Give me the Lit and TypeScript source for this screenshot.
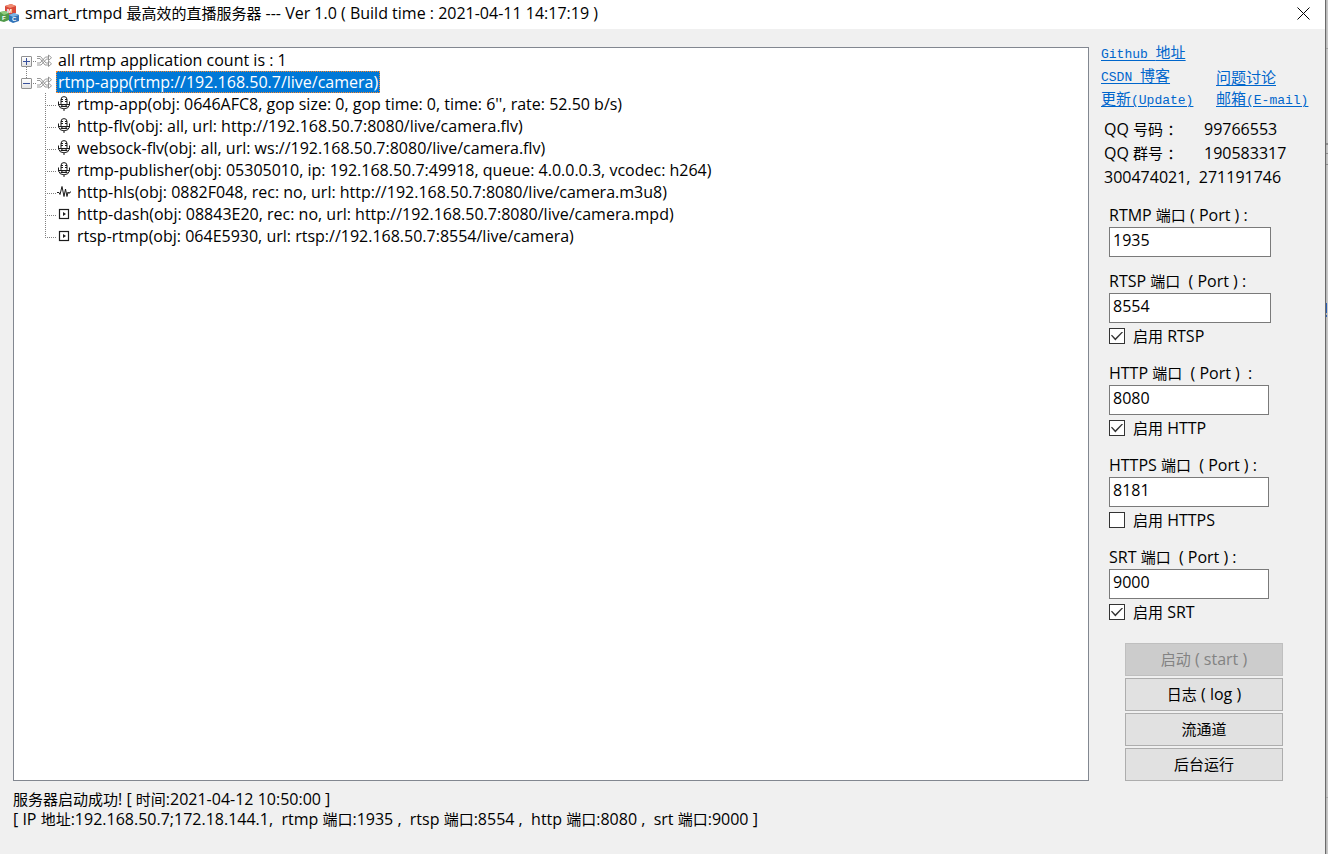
import { LitElement, html, css, svg, nothing } from "lit";
import { customElement, property, state } from "lit/decorators.js";
import { classMap } from "lit/directives/class-map.js";

type IconName = "mic" | "wave" | "play";

interface TreeLeaf {
  icon: IconName;
  text: string;
}

interface PortSetting {
  id: string;
  label: string;
  value: string;
  wide?: boolean;
  toggle?: string;
  enabled?: boolean;
}

const LEAVES: TreeLeaf[] = [
  { icon: "mic", text: "rtmp-app(obj: 0646AFC8, gop size: 0, gop time: 0, time: 6'', rate: 52.50 b/s)" },
  { icon: "mic", text: "http-flv(obj: all, url: http://192.168.50.7:8080/live/camera.flv)" },
  { icon: "mic", text: "websock-flv(obj: all, url: ws://192.168.50.7:8080/live/camera.flv)" },
  { icon: "mic", text: "rtmp-publisher(obj: 05305010, ip: 192.168.50.7:49918, queue: 4.0.0.0.3, vcodec: h264)" },
  { icon: "wave", text: "http-hls(obj: 0882F048, rec: no, url: http://192.168.50.7:8080/live/camera.m3u8)" },
  { icon: "play", text: "http-dash(obj: 08843E20, rec: no, url: http://192.168.50.7:8080/live/camera.mpd)" },
  { icon: "play", text: "rtsp-rtmp(obj: 064E5930, url: rtsp://192.168.50.7:8554/live/camera)" },
];

const PORTS: PortSetting[] = [
  { id: "rtmp", label: "RTMP 端口 ( Port ) :", value: "1935", wide: true },
  { id: "rtsp", label: "RTSP 端口  ( Port ) :", value: "8554", wide: true, toggle: "启用 RTSP", enabled: true },
  { id: "http", label: "HTTP 端口  ( Port )  :", value: "8080", toggle: "启用 HTTP", enabled: true },
  { id: "https", label: "HTTPS 端口  ( Port ) :", value: "8181", toggle: "启用 HTTPS", enabled: false },
  { id: "srt", label: "SRT 端口  ( Port ) :", value: "9000", toggle: "启用 SRT", enabled: true },
];

// Han characters look larger than Latin ones at the same size, so they are set a step smaller.
const HAN = /([\u3000-\u9fff\uff00-\uffef]+)/;
const hanStyles = css`
  .han { font-size: 15px; line-height: 1; }
`;
const mixed = (text: string) =>
  text.split(HAN).map((part, i) => (i % 2 ? html`<span class="han">${part}</span>` : part));

const LEAF_ICONS = {
  mic: svg`
    <path d="M4 7.500 V3.500 Q4 .6 7 .6 Q10 .6 10 3.500 V7.500 Q10 10.500 7 10.500 Q4 10.500 4 7.500 Z" />
    <path d="M4 3.500 H6 M8 3.500 H10 M4 5.500 H6 M8 5.500 H10 M1 8.500 H13 M3.500 10.500 H10.500" />
    <path d="M1.500 5.500 V9 Q2.500 12.800 7 12.800 Q11.500 12.800 12.500 9 V5.500 M7 13 V15" />`,
  wave: svg`<path d="M0 8.500 H2 L3 10.500 L5 2.500 L7 12.500 L8.500 5 L10 12.500 L11 8 L12 9.500 L13 8 H14" />`,
  play: svg`<rect x="2.500" y="3.500" width="9" height="9" stroke-width="1.200" /><path class="solid" d="M6 6 L9 8 L6 10 Z" />`,
};

@customElement("app-tree")
export class AppTree extends LitElement {
  static styles = css`
    :host { display: block; overflow: auto; background: #fff; border: 1px solid #828790; padding: 1px 7px; }
    ul { list-style: none; margin: 0; padding: 0; }
    .row { display: flex; align-items: center; height: 22px; white-space: pre; }
    .toggle, .dots, .shuffle, .leaf-icon { margin-top: 2px; }
    .toggle {
      appearance: none; flex: none; width: 11px; height: 11px; padding: 0; border: 1px solid #919191;
      border-radius: 1px; background: linear-gradient(#fff, #e4e4e4); display: flex;
      margin-left: 0; margin-right: 0; margin-bottom: 0;
    }
    .toggle svg { width: 9px; height: 9px; stroke: #39519c; fill: none; }
    .dots { flex: none; width: 5px; height: 1px; background: repeating-linear-gradient(90deg, transparent 0 1px, #808080 1px 2px); }
    .shuffle { flex: none; width: 15px; height: 14px; stroke: #808080; fill: none; margin-right: 4px; }
    .label { line-height: 20px; padding: 0 1px; border: 1px solid transparent; }
    .selected { background: #0078d7; color: #fff; border: 1px dotted #ff8728; }
    .link-down { background: repeating-linear-gradient(#808080 0 1px, transparent 1px 2px) 5px 18px / 1px 4px no-repeat; }
    .link-up { background: repeating-linear-gradient(#808080 0 1px, transparent 1px 2px) 5px 0 / 1px 7px no-repeat; }
    .children { margin-left: 24px; }
    .branch {
      flex: none; width: 12px; height: 22px;
      background:
        repeating-linear-gradient(#808080 0 1px, transparent 1px 2px) 0 0 / 1px 22px no-repeat,
        repeating-linear-gradient(90deg, #808080 0 1px, transparent 1px 2px) 0 12px / 12px 1px no-repeat;
    }
    .branch.last { background-size: 1px 13px, 12px 1px; }
    .leaf-icon { flex: none; width: 14px; height: 18px; stroke: #1c1c1c; fill: none; margin-right: 4px; }
    .solid { fill: #1c1c1c; stroke: none; }
  `;

  @state() private open = true;

  private shuffle() {
    return html`<svg class="shuffle" viewBox="0 0 15 14" aria-hidden="true">
      <path d="M0 2.500 H3.500 L9 9 H12 M0 4.500 H3 L8 11 H12 M0 9 H3 L8.500 3 H12 M0 11 H4 L9.500 5 H12 M11.500 1 L14.500 3.700 L11.500 6.500 Z M11.500 7 L14.500 9.800 L11.500 12.500 Z" stroke-width=".8" />
    </svg>`;
  }

  render() {
    return html`<ul role="tree">
      <li role="treeitem" aria-expanded="false">
        <div class="row link-down">
          <button class="toggle" aria-label="Expand">
            <svg viewBox="0 0 9 9"><path d="M1 4.500 H8 M4.500 1 V8" /></svg>
          </button>
          <span class="dots"></span>${this.shuffle()}<span class="label">all rtmp application count is : 1</span>
        </div>
      </li>
      <li role="treeitem" aria-selected="true" aria-expanded=${this.open}>
        <div class="row link-up">
          <button class="toggle" aria-label="Toggle" @click=${() => (this.open = !this.open)}>
            <svg viewBox="0 0 9 9"><path d=${this.open ? "M1 4.500 H8" : "M1 4.500 H8 M4.500 1 V8"} /></svg>
          </button>
          <span class="dots"></span>${this.shuffle()}<span class="label selected">rtmp-app(rtmp://192.168.50.7/live/camera)</span>
        </div>
        ${this.open
          ? html`<ul class="children" role="group">
              ${LEAVES.map(
                (leaf, i) => html`<li class="row" role="treeitem">
                  <span class=${classMap({ branch: true, last: i === LEAVES.length - 1 })}></span>
                  <svg class="leaf-icon" viewBox="0 0 14 18" aria-hidden="true">${LEAF_ICONS[leaf.icon]}</svg>
                  <span class="label">${leaf.text}</span>
                </li>`
              )}
            </ul>`
          : nothing}
      </li>
    </ul>`;
  }
}

@customElement("port-field")
export class PortField extends LitElement {
  static styles = [
    hanStyles,
    css`
      :host { display: flex; flex-direction: column; align-items: flex-start; }
      .caption { height: 23px; line-height: 22px; white-space: pre; }
      .box {
        box-sizing: border-box; width: 160px; height: 30px; padding: 0 3px 4px; border: 1px solid #7a7a7a;
        background: #fff; color: #000; font: inherit; border-radius: 0; outline: 0;
      }
      .box.wide { width: 162px; }
      .enable { display: flex; align-items: center; gap: 8px; height: 26px; line-height: 22px; }
      .tick {
        appearance: none; box-sizing: border-box; width: 16px; height: 16px; margin: 0;
        border: 1px solid #333; background: #fff; display: grid; place-items: center;
      }
      .tick:checked::before {
        content: ""; width: 12px; height: 9px; background: #333;
        clip-path: polygon(0 45%, 8% 35%, 36% 74%, 92% 0, 100% 9%, 36% 100%);
      }
    `,
  ];

  @property({ attribute: false }) setting!: PortSetting;

  render() {
    const s = this.setting;
    return html`
      <label class="caption" for=${s.id}>${mixed(s.label)}</label>
      <input class=${classMap({ box: true, wide: !!s.wide })} id=${s.id} type="text" .value=${s.value} />
      ${s.toggle
        ? html`<label class="enable"><input class="tick" type="checkbox" .checked=${!!s.enabled} /><span>${mixed(s.toggle)}</span></label>`
        : nothing}
    `;
  }
}

@customElement("app-root")
export class AppRoot extends LitElement {
  static styles = [
    hanStyles,
    css`
      :host {
        display: grid; grid-template-columns: 1fr 3px; min-height: 100vh;
        font: 16px "Open Sans", "Noto Sans CJK SC", sans-serif; color: #000; background: #f0f0f0;
      }
      .window { display: flex; flex-direction: column; min-width: 0; }
      .edge {
        border-left: 1px solid #6b6b6b;
        background:
          linear-gradient(#a0a0a0, #a0a0a0) 0 48px / 2px 1px no-repeat,
          linear-gradient(#8c8c8c, #8c8c8c) 0 143px / 2px 2px no-repeat,
          linear-gradient(#8c8c8c, #8c8c8c) 0 153px / 2px 1px no-repeat,
          linear-gradient(#8c8c8c, #8c8c8c) 0 164px / 2px 1px no-repeat,
          linear-gradient(#2b5fb5, #2b5fb5) 0 303px / 1px 10px no-repeat,
          linear-gradient(#2b5fb5, #2b5fb5) 0 315px / 1px 2px no-repeat,
          linear-gradient(#a8a8a8, #a8a8a8) 0 797px / 2px 1px no-repeat,
          linear-gradient(90deg, #b4b4b4, #d0d0d0);
      }
      .titlebar { display: flex; align-items: flex-start; height: 29px; background: #fff; gap: 5px; white-space: pre; }
      .logo { flex: none; width: 20px; height: 22px; margin-top: 2px; }
      .logo-letter { font: bold 6px "Liberation Sans", sans-serif; fill: #fff; }
      .title { flex: 1; line-height: 27px; }
      .close { width: 44px; height: 27px; padding: 0; border: 0; background: none; display: grid; place-items: center; }
      .close svg { width: 13px; height: 13px; stroke: #000; fill: none; }
      .main { flex: 1; display: grid; grid-template-columns: 1fr 224px; gap: 12px; padding: 18px 0 0 13px; }
      .side { margin-top: -5px; }
      .links { display: grid; grid-template-columns: 115px 1fr; grid-auto-rows: 23px; align-items: center; }
      .link { color: #0066cc; font-size: 15px; line-height: 18px; white-space: pre; justify-self: start; text-decoration-thickness: 1px; text-underline-offset: 2px; }
      .latin { font-family: "Liberation Mono", monospace; font-size: 13px; }
      .contact { display: grid; grid-template-columns: 100px 1fr; grid-auto-rows: 24px; line-height: 22px; margin: 7px 0 14px 3px; white-space: pre; }
      .span { grid-column: 1 / -1; }
      .ports { display: flex; flex-direction: column; gap: 13px; margin-left: 8px; }
      .actions { display: flex; flex-direction: column; gap: 2px; width: 158px; margin: 18px 0 0 24px; }
      .action { height: 33px; padding: 0 0 2px; border: 1px solid #adadad; background: #e1e1e1; color: #000; font: inherit; }
      .action:disabled { background: #ccc; border-color: #bfbfbf; color: #838383; }
      .status { padding: 8px 13px 25px; }
      .line { margin: 0; line-height: 20px; white-space: pre-wrap; }
    `,
  ];

  render() {
    return html`
      <div class="window">
        <header class="titlebar">
          <svg class="logo" viewBox="0 0 20 22" aria-hidden="true">
            <path fill="#d84a3a" d="M5 4 L11 2 L16 4 V11 L10 13 L5 11 Z" />
            <path fill="#f08a70" d="M5 4 L11 2 L16 4 L10 6 Z" />
            <path fill="#4f9a4a" d="M0 10 L6 9 L9 11 V18 L4 20 L0 19 Z" />
            <path fill="#8fcb7c" d="M0 10 L6 9 L9 11 L4 13 Z" />
            <path fill="#3173b8" d="M9 13 L14 11 L19 13 V19 L13 21 L9 19 Z" />
            <path fill="#7db4e4" d="M9 13 L14 11 L19 13 L13 15 Z" />
            <text class="logo-letter" x="7" y="11">M</text>
            <text class="logo-letter" x="2" y="18">F</text>
            <text class="logo-letter" x="12" y="19">C</text>
          </svg>
          <span class="title">${mixed("smart_rtmpd 最高效的直播服务器 --- Ver 1.0 ( Build time : 2021-04-11 14:17:19 )")}</span>
          <button class="close" aria-label="Close"><svg viewBox="0 0 13 13"><path d="M.5 .5 L12.500 12.500 M12.500 .5 L.5 12.500" /></svg></button>
        </header>
        <main class="main">
          <app-tree></app-tree>
          <aside class="side">
            <nav class="links">
              <a class="link span" href="#github"><span class="latin">Github </span>地址</a>
              <a class="link" href="#csdn"><span class="latin">CSDN </span>博客</a>
              <a class="link" href="#issues">问题讨论</a>
              <a class="link" href="#update">更新<span class="latin">(Update)</span></a>
              <a class="link" href="#mail">邮箱<span class="latin">(E-mail)</span></a>
            </nav>
            <div class="contact">
              <span>${mixed("QQ 号码 ：")}</span><span>99766553</span>
              <span>${mixed("QQ 群号 ：")}</span><span>190583317</span>
              <span class="span">300474021,  271191746</span>
            </div>
            <div class="ports">${PORTS.map((p) => html`<port-field .setting=${p}></port-field>`)}</div>
            <div class="actions">
              <button class="action" disabled>${mixed("启动 ( start )")}</button>
              <button class="action">${mixed("日志 ( log )")}</button>
              <button class="action">${mixed("流通道")}</button>
              <button class="action">${mixed("后台运行")}</button>
            </div>
          </aside>
        </main>
        <footer class="status">
          <p class="line">${mixed("服务器启动成功! [ 时间:2021-04-12 10:50:00 ]")}</p>
          <p class="line">${mixed("[ IP 地址:192.168.50.7;172.18.144.1,  rtmp 端口:1935 ,  rtsp 端口:8554 ,  http 端口:8080 ,  srt 端口:9000 ]")}</p>
        </footer>
      </div>
      <div class="edge"></div>
    `;
  }
}
